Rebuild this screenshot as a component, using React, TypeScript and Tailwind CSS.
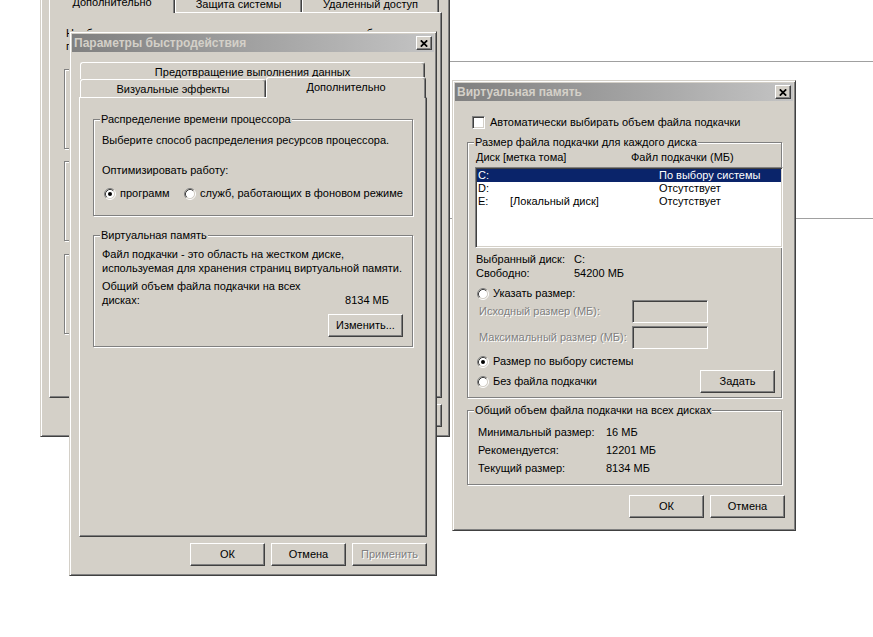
import React from "react";

const raised =
  "border border-t-white border-l-white border-r-[#404040] border-b-[#404040] shadow-[inset_-1px_-1px_0_#808080]";
const sunken =
  "border border-t-[#808080] border-l-[#808080] border-r-white border-b-white shadow-[inset_1px_1px_0_#404040,inset_-1px_-1px_0_#d4d0c8]";
const frame =
  "border border-t-[#d4d0c8] border-l-[#d4d0c8] border-r-[#404040] border-b-[#404040] shadow-[inset_1px_1px_0_#fff,inset_-1px_-1px_0_#808080]";
const etched = "border border-[#808080] shadow-[inset_1px_1px_0_#fff,1px_1px_0_#fff]";
const tab =
  "border-t border-l border-r border-t-white border-l-white border-r-[#404040] shadow-[inset_-1px_0_0_#808080] rounded-t-[3px] bg-[#d4d0c8] text-center pt-[3px] leading-[12px] whitespace-nowrap";
const disabled = "text-[#808080] [text-shadow:1px_1px_0_#fff]";

function Button({ children, off }: { children: React.ReactNode; off?: boolean }) {
  return (
    <div
      className={`${raised} w-[75px] h-[23px] shrink-0 flex items-center justify-center bg-[#d4d0c8] ${off ? disabled : ""}`}
    >
      {children}
    </div>
  );
}

function Radio({ checked }: { checked?: boolean }) {
  return (
    <svg width="12" height="12" viewBox="0 0 12 12" className="shrink-0">
      <circle cx="6" cy="6" r="4.5" fill="#fff" />
      <path d="M2.11 9.89 A5.5 5.5 0 0 1 9.89 2.11" stroke="#808080" fill="none" />
      <path d="M9.89 2.11 A5.5 5.5 0 0 1 2.11 9.89" stroke="#fff" fill="none" />
      <path d="M2.82 9.18 A4.5 4.5 0 0 1 9.18 2.82" stroke="#404040" fill="none" />
      <path d="M9.18 2.82 A4.5 4.5 0 0 1 2.82 9.18" stroke="#d4d0c8" fill="none" />
      {checked && <circle cx="6" cy="6" r="2" fill="#000" />}
    </svg>
  );
}

function TitleBar({ title }: { title: string }) {
  return (
    <div className="h-[18px] flex items-center justify-between bg-linear-to-r from-[#808080] to-[#c4c4c4] pl-[2px] pr-[2px]">
      <span className="font-bold text-[12px] text-[#d4d0c8] whitespace-nowrap">{title}</span>
      <div className={`${raised} w-[16px] h-[14px] bg-[#d4d0c8] flex items-center justify-center`}>
        <svg width="8" height="7" viewBox="0 0 8 7">
          <path d="M0.8 0.3 L7.2 6.7 M7.2 0.3 L0.8 6.7" stroke="#000" strokeWidth="1.7" />
        </svg>
      </div>
    </div>
  );
}

function Group({
  title,
  className,
  children,
}: {
  title: string;
  className?: string;
  children?: React.ReactNode;
}) {
  return (
    <div className={`relative ${etched} ${className ?? ""}`}>
      <span className="absolute left-[6px] top-[-7px] px-[1px] leading-[13px] bg-[#d4d0c8] whitespace-nowrap">
        {title}
      </span>
      {children}
    </div>
  );
}

function SystemProperties() {
  return (
    <div className={`absolute left-[40px] top-[-40px] w-[410px] h-[477px] ${frame} bg-[#d4d0c8] p-[2px]`}>
      <TitleBar title="Свойства системы" />
      <div className="mt-[11px] ml-[6px] w-[393px]">
        <div className="h-[20px] flex items-end">
          <div className={`${tab} relative z-10 w-[126px] h-[21px] -mb-[1px]`}>Дополнительно</div>
          <div className={`${tab} w-[127px] h-[18px]`}>Защита системы</div>
          <div className={`${tab} w-[137px] h-[18px]`}>Удаленный доступ</div>
        </div>
        <div className={`${raised} h-[386px] pt-[14px] pl-[14px]`}>
          <div className="pl-[2px] leading-[13px] whitespace-nowrap">
            Необходимо иметь права администратора для изменения большинства
            <br />
            перечисленных параметров.
          </div>
          <Group title="Быстродействие" className="mt-[16px] w-[362px] h-[80px] pt-[12px] pl-[8px]">
            <div className="leading-[13px]">Визуальные эффекты, использование процессора, оперативной</div>
            <div className="leading-[13px]">и виртуальной памяти</div>
          </Group>
          <Group title="Профили пользователей" className="mt-[12px] w-[362px] h-[80px] pt-[12px] pl-[8px]">
            <div className="leading-[13px]">Параметры рабочего стола, относящиеся ко входу в систему</div>
          </Group>
          <Group title="Загрузка и восстановление" className="mt-[13px] w-[362px] h-[80px] pt-[12px] pl-[8px]">
            <div className="leading-[13px]">Загрузка и восстановление системы, отладочная информация</div>
          </Group>
        </div>
      </div>
      <div className="mt-[6px] ml-[6px] w-[393px] flex justify-end gap-[6px]">
        <Button>ОК</Button>
        <Button>Отмена</Button>
        <Button>Применить</Button>
      </div>
    </div>
  );
}

function Performance() {
  return (
    <div className={`absolute left-[69px] top-[31px] w-[368px] h-[545px] ${frame} bg-[#d4d0c8] p-[2px]`}>
      <TitleBar title="Параметры быстродействия" />
      <div className="mt-[10px] ml-[7px] w-[348px]">
        <div className="h-[17px] pl-[1px] pr-[2px] flex">
          <div className={`${tab} flex-1`}>Предотвращение выполнения данных</div>
        </div>
        <div className="h-[18px] flex items-end">
          <div className={`${tab} ml-[1px] w-[186px] h-[18px]`}>Визуальные эффекты</div>
          <div className={`${tab} relative z-10 w-[160px] h-[21px] -mb-[1px]`}>Дополнительно</div>
        </div>
        <div className={`${raised} h-[440px] pt-[21px] pl-[13px]`}>
          <Group title="Распределение времени процессора" className="w-[320px] h-[97px] pt-[14px] pl-[8px]">
            <div className="leading-[13px]">Выберите способ распределения ресурсов процессора.</div>
            <div className="leading-[13px] mt-[17px]">Оптимизировать работу:</div>
            <div className="mt-[10px] h-[13px] flex items-center pl-[2px] whitespace-nowrap">
              <div className="w-[80px] flex items-center gap-[4px]">
                <Radio checked />
                программ
              </div>
              <div className="flex items-center gap-[4px]">
                <Radio />
                служб, работающих в фоновом режиме
              </div>
            </div>
          </Group>
          <Group title="Виртуальная память" className="mt-[19px] w-[320px] h-[112px] pt-[11px] pl-[8px] pr-[9px]">
            <div className="leading-[14px]">Файл подкачки - это область на жестком диске,</div>
            <div className="leading-[14px] whitespace-nowrap">используемая для хранения страниц виртуальной памяти.</div>
            <div className="leading-[14px] mt-[4px]">Общий объем файла подкачки на всех</div>
            <div className="leading-[14px] flex justify-between pr-[14px]">
              <span>дисках:</span>
              <span>8134 МБ</span>
            </div>
            <div className="mt-[7px] flex justify-end">
              <Button>Изменить...</Button>
            </div>
          </Group>
        </div>
      </div>
      <div className="mt-[6px] ml-[7px] w-[348px] flex justify-end gap-[6px]">
        <Button>ОК</Button>
        <Button>Отмена</Button>
        <Button off>Применить</Button>
      </div>
    </div>
  );
}

const drives = [
  { disk: "C:", label: "", size: "По выбору системы", selected: true },
  { disk: "D:", label: "", size: "Отсутствует" },
  { disk: "E:", label: "[Локальный диск]", size: "Отсутствует" },
];

function VirtualMemory() {
  return (
    <div className={`absolute left-[452px] top-[80px] w-[344px] h-[451px] ${frame} bg-[#d4d0c8] p-[2px]`}>
      <TitleBar title="Виртуальная память" />
      <div className="mt-[15px] ml-[17px] h-[13px] flex items-center gap-[5px]">
        <div className={`${sunken} w-[13px] h-[13px] bg-white`} />
        <span>Автоматически выбирать объем файла подкачки</span>
      </div>
      <Group title="Размер файла подкачки для каждого диска" className="mt-[13px] ml-[12px] w-[315px] h-[256px]">
        <div className="pt-[8px] pl-[8px] flex leading-[13px]">
          <span className="w-[155px]">Диск [метка тома]</span>
          <span>Файл подкачки (МБ)</span>
        </div>
        <div className={`mt-[3px] ml-[7px] w-[308px] h-[81px] bg-white ${sunken} p-[1px]`}>
          {drives.map((d) => (
            <div
              key={d.disk}
              className={`h-[13px] leading-[13px] flex pl-[1px] ${d.selected ? "bg-[#0a246a] text-white" : ""}`}
            >
              <span className="w-[181px] flex">
                <span className="w-[32px]">{d.disk}</span>
                <span>{d.label}</span>
              </span>
              <span>{d.size}</span>
            </div>
          ))}
        </div>
        <div className="mt-[5px] pl-[8px] leading-[13px] flex">
          <span className="w-[98px]">Выбранный диск:</span>
          <span>C:</span>
        </div>
        <div className="mt-[1px] pl-[8px] leading-[13px] flex">
          <span className="w-[98px]">Свободно:</span>
          <span>54200 МБ</span>
        </div>
        <div className="mt-[7px] pl-[9px] h-[13px] flex items-center gap-[4px]">
          <Radio />
          <span>Указать размер:</span>
        </div>
        <div className="h-[23px] flex items-center pl-[11px]">
          <span className={`w-[153px] ${disabled}`}>Исходный размер (МБ):</span>
          <div className={`${sunken} w-[76px] h-[23px]`} />
        </div>
        <div className="mt-[3px] h-[23px] flex items-center pl-[11px]">
          <span className={`w-[153px] ${disabled}`}>Максимальный размер (МБ):</span>
          <div className={`${sunken} w-[76px] h-[23px]`} />
        </div>
        <div className="mt-[6px] pl-[9px] h-[13px] flex items-center gap-[4px]">
          <Radio checked />
          <span>Размер по выбору системы</span>
        </div>
        <div className="mt-[2px] h-[23px] flex items-center justify-between pl-[9px] pr-[6px]">
          <div className="flex items-center gap-[4px]">
            <Radio />
            <span>Без файла подкачки</span>
          </div>
          <Button>Задать</Button>
        </div>
      </Group>
      <Group title="Общий объем файла подкачки на всех дисках" className="mt-[12px] ml-[12px] w-[315px] h-[75px] pt-[12px] pl-[10px]">
        <div className="leading-[18px] flex">
          <span className="w-[128px]">Минимальный размер:</span>
          <span>16 МБ</span>
        </div>
        <div className="leading-[18px] flex">
          <span className="w-[128px]">Рекомендуется:</span>
          <span>12201 МБ</span>
        </div>
        <div className="leading-[18px] flex">
          <span className="w-[128px]">Текущий размер:</span>
          <span>8134 МБ</span>
        </div>
      </Group>
      <div className="mt-[10px] pr-[8px] flex justify-end gap-[6px]">
        <Button>ОК</Button>
        <Button>Отмена</Button>
      </div>
    </div>
  );
}

export default function App() {
  return (
    <div className="relative w-[873px] h-[637px] overflow-hidden bg-white text-[11px] text-black font-['Liberation_Sans',Arial,sans-serif]">
      <SystemProperties />
      <div className="absolute left-[450px] top-[61px] w-[423px] h-px bg-[#a0a0a0]" />
      <div className="absolute left-[450px] top-[218px] w-[423px] h-px bg-[#a0a0a0]" />
      <Performance />
      <VirtualMemory />
    </div>
  );
}
